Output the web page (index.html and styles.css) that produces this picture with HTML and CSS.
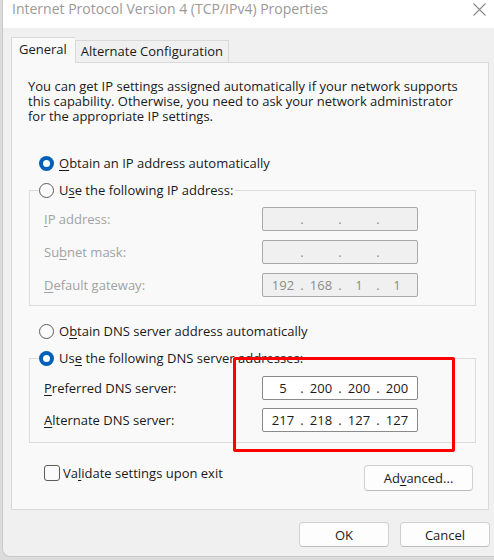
FILE: index.html
```html
<!DOCTYPE html>
<html>
<head>
<meta charset="utf-8">
<link rel="stylesheet" href="styles.css">
</head>
<body>
<div class="window">
  <div class="titlebar">
    <span class="title">Internet Protocol Version 4 (TCP/IPv4) Properties</span>
    <svg class="close" width="13" height="13" viewBox="0 0 13 13"><path d="M0.5 0.5 L12.5 12.5 M12.5 0.5 L0.5 12.5" stroke="#8a8a8a" stroke-width="1.1" fill="none"/></svg>
  </div>
  <div class="content">
    <div class="tabs">
      <div class="tab active">General</div>
      <div class="tab">Alternate Configuration</div>
    </div>
    <div class="panel">
      <p class="desc">You can get IP settings assigned automatically if your network supports this capability. Otherwise, you need to ask your network administrator for the appropriate IP settings.</p>

      <div class="radio-row first">
        <span class="radio on"></span><span><u>O</u>btain an IP address automatically</span>
      </div>

      <fieldset class="group">
        <legend class="radio-row"><span class="radio"></span><span>U<u>s</u>e the following IP address:</span></legend>
        <div class="fields">
          <span class="lbl disabled"><u>I</u>P address:</span>
          <div class="ip disabled"><span class="seg"></span><span class="dot">.</span><span class="seg"></span><span class="dot">.</span><span class="seg"></span><span class="dot">.</span><span class="seg"></span></div>
          <span class="lbl disabled">Su<u>b</u>net mask:</span>
          <div class="ip disabled"><span class="seg"></span><span class="dot">.</span><span class="seg"></span><span class="dot">.</span><span class="seg"></span><span class="dot">.</span><span class="seg"></span></div>
          <span class="lbl disabled"><u>D</u>efault gateway:</span>
          <div class="ip disabled"><span class="seg">192</span><span class="dot">.</span><span class="seg">168</span><span class="dot">.</span><span class="seg">1</span><span class="dot">.</span><span class="seg">1</span></div>
        </div>
      </fieldset>

      <div class="radio-row dns-auto">
        <span class="radio"></span><span>O<u>b</u>tain DNS server address automatically</span>
      </div>

      <fieldset class="group group2">
        <legend class="radio-row"><span class="radio on"></span><span>Us<u>e</u> the following DNS server addresses:</span></legend>
        <div class="fields">
          <span class="lbl"><u>P</u>referred DNS server:</span>
          <div class="ip"><span class="seg">5</span><span class="dot">.</span><span class="seg">200</span><span class="dot">.</span><span class="seg">200</span><span class="dot">.</span><span class="seg">200</span></div>
          <span class="lbl"><u>A</u>lternate DNS server:</span>
          <div class="ip"><span class="seg">217</span><span class="dot">.</span><span class="seg">218</span><span class="dot">.</span><span class="seg">127</span><span class="dot">.</span><span class="seg">127</span></div>
        </div>
      </fieldset>

      <div class="bottom-row">
        <label class="check-row"><span class="checkbox"></span><span>Va<u>l</u>idate settings upon exit</span></label>
        <button class="btn adv">Ad<u>v</u>anced...</button>
      </div>

      <div class="highlight"></div>
    </div>
    <div class="actions">
      <button class="btn dlg">OK</button>
      <button class="btn dlg">Cancel</button>
    </div>
  </div>
</div>
</body>
</html>
```

FILE: styles.css
```css
* { box-sizing: border-box; }

html, body {
  margin: 0;
  padding: 0;
  width: 494px;
  height: 560px;
  overflow: hidden;
  background: #dcdcdc;
  font-family: "Open Sans", "Noto Sans", "Liberation Sans", sans-serif;
  font-size: 13px;
  color: #1a1a1a;
}

u { text-decoration: underline; text-underline-offset: 2px; }

.window {
  margin-left: 2px;
  width: 500px;
  height: 557px;
  background: #f0f0f0;
  border-left: 1px solid #c9c9c9;
  border-bottom: 1px solid #c9c9c9;
  border-bottom-left-radius: 8px;
}

.titlebar {
  height: 28px;
  background: #ffffff;
  display: flex;
  align-items: flex-start;
  justify-content: space-between;
  padding: 0 16px 0 9px;
}

.title {
  font-size: 14px;
  color: #9a9a9a;
  line-height: 18px;
}

.close { margin-top: 3px; }

.content {
  padding: 9px 0 0 8px;
}

.tabs {
  display: flex;
  align-items: flex-end;
  height: 25px;
}

.tab {
  height: 22px;
  padding: 0 5px 0 5px;
  border: 1px solid #d9d9d9;
  border-bottom: none;
  background: #f0f0f0;
  line-height: 21px;
}

.tab.active {
  height: 26px;
  margin-bottom: -1px;
  background: #f9f9f9;
  padding: 0 8px 0 7px;
  line-height: 22px;
  position: relative;
  z-index: 1;
  border-right: none;
}

.panel {
  position: relative;
  width: 478px;
  height: 448px;
  background: #f9f9f9;
  border: 1px solid #d9d9d9;
  padding: 16px 12px 0 16px;
}

.desc {
  margin: 0;
  line-height: 15px;
  width: 436px;
}

.radio-row {
  display: flex;
  align-items: center;
  height: 20px;
  gap: 5px;
}

.radio-row.first {
  margin: 29px 0 0 11px;
}

.radio {
  width: 15px;
  height: 15px;
  border-radius: 50%;
  border: 1px solid #5c5c5c;
  background: #fbfbfb;
  flex: none;
  position: relative;
}

.radio.on {
  border: none;
  background: #005fb8;
}

.radio.on::after {
  content: "";
  position: absolute;
  left: 4px;
  top: 4px;
  width: 7px;
  height: 7px;
  border-radius: 50%;
  background: #ffffff;
}

.group {
  margin: 7px 0 0 1px;
  width: 447px;
  border: 1px solid #dcdcdc;
  padding: 0 0 8px 14px;
  min-width: 0;
}

.group legend {
  margin-left: -5px;
  padding: 0 2px 0 0;
  background: #f9f9f9;
}

.fields {
  display: grid;
  grid-template-columns: 218px 156px;
  row-gap: 9px;
  align-items: center;
  margin-top: 7px;
}

.group2 .fields {
  row-gap: 8px;
  margin-top: 8px;
}

.group2 {
  margin-top: 7px;
  padding-bottom: 10px;
}

.lbl.disabled { color: #a2a2a2; }

.ip {
  height: 24px;
  display: flex;
  align-items: center;
  border: 1px solid #8a8a8a;
  border-radius: 2px;
  background: #ffffff;
  padding: 0 1px;
  font-size: 13px;
}

.ip.disabled {
  background: #f0f0f0;
  border-color: #a9a9a9;
  color: #8c8c8c;
}

.seg {
  flex: 1;
  text-align: center;
}

.dot { width: 0; display: flex; justify-content: center; }

.radio-row.dns-auto {
  margin: 15px 0 0 11px;
}

.bottom-row {
  display: flex;
  justify-content: space-between;
  align-items: flex-start;
  margin-top: 21px;
  width: 445px;
}

.check-row {
  display: flex;
  align-items: center;
  gap: 3px;
  margin-left: 16px;
  height: 18px;
}

.checkbox {
  width: 16px;
  height: 16px;
  border: 1px solid #5c5c5c;
  border-radius: 3px;
  background: #fbfbfb;
}

.btn {
  font-family: inherit;
  font-size: 13px;
  color: #1a1a1a;
  background: #fdfdfd;
  border: 1px solid #d0d0d0;
  border-bottom-color: #bcbcbc;
  border-radius: 4px;
  padding: 0;
}

.btn.adv {
  width: 109px;
  height: 26px;
  margin-top: 1px;
}

.actions {
  display: flex;
  gap: 11px;
  margin: 12px 0 0 288px;
}

.btn.dlg {
  width: 90px;
  height: 25px;
}

.highlight {
  position: absolute;
  left: 221px;
  top: 294px;
  width: 222px;
  height: 95px;
  border: 3.5px solid #ff0000;
  border-radius: 2px;
}
```
